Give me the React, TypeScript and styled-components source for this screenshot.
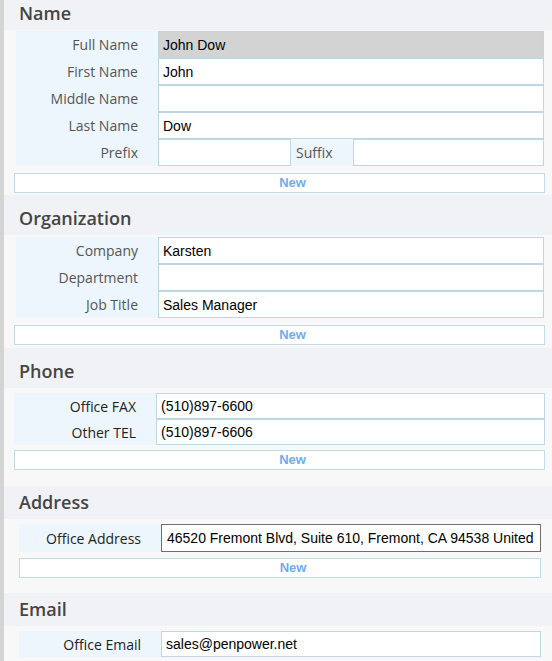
import React from 'react';
import styled, { createGlobalStyle } from 'styled-components';

const GlobalStyle = createGlobalStyle`
  html, body {
    margin: 0;
    padding: 0;
    background: #f8f8f8;
  }
  body {
    font-family: "Open Sans", "Noto Sans", sans-serif;
  }
`;

type Field = {
  label: string;
  value?: string;
  readOnly?: boolean;
  focused?: boolean;
  extra?: { label: string; value?: string };
};

type SectionData = {
  title: string;
  headerHeight: number;
  bodyPad: string;
  side: [number, number];
  rowHeight: number;
  darkLabels?: boolean;
  showNew?: boolean;
  newGap?: number;
  fields: Field[];
};

const sections: SectionData[] = [
  {
    title: 'Name',
    headerHeight: 30,
    bodyPad: '1px 0 2px',
    side: [12, 8],
    rowHeight: 27,
    showNew: true,
    newGap: 7,
    fields: [
      { label: 'Full Name', value: 'John Dow', readOnly: true },
      { label: 'First Name', value: 'John' },
      { label: 'Middle Name' },
      { label: 'Last Name', value: 'Dow' },
      { label: 'Prefix', extra: { label: 'Suffix' } },
    ],
  },
  {
    title: 'Organization',
    headerHeight: 40,
    bodyPad: '2px 0 3px',
    side: [12, 8],
    rowHeight: 27,
    showNew: true,
    newGap: 7,
    fields: [
      { label: 'Company', value: 'Karsten' },
      { label: 'Department' },
      { label: 'Job Title', value: 'Sales Manager' },
    ],
  },
  {
    title: 'Phone',
    headerHeight: 40,
    bodyPad: '5px 0 16px',
    side: [10, 7],
    rowHeight: 26,
    darkLabels: true,
    showNew: true,
    newGap: 5,
    fields: [
      { label: 'Office FAX', value: '(510)897-6600' },
      { label: 'Other TEL', value: '(510)897-6606' },
    ],
  },
  {
    title: 'Address',
    headerHeight: 33,
    bodyPad: '5px 0 15px',
    side: [15, 11],
    rowHeight: 28,
    darkLabels: true,
    showNew: true,
    newGap: 6,
    fields: [
      {
        label: 'Office Address',
        value: '46520 Fremont Blvd, Suite 610, Fremont, CA 94538 United',
        focused: true,
      },
    ],
  },
  {
    title: 'Email',
    headerHeight: 33,
    bodyPad: '5px 0 10px',
    side: [15, 11],
    rowHeight: 26,
    darkLabels: true,
    fields: [{ label: 'Office Email', value: 'sales@penpower.net' }],
  },
];

export default function App() {
  return (
    <>
      <GlobalStyle />
      <Page>
        {sections.map((section) => (
          <section key={section.title}>
            <Header $h={section.headerHeight}>{section.title}</Header>
            <Body $pad={section.bodyPad}>
              <Rows $left={section.side[0]} $right={section.side[1]}>
                {section.fields.map((field) => (
                  <Row key={field.label} $h={section.rowHeight}>
                    <Label $dark={section.darkLabels}>{field.label}</Label>
                    {field.extra ? (
                      <SplitCell>
                        <Input>{field.value}</Input>
                        <SubLabel>{field.extra.label}</SubLabel>
                        <Input>{field.extra.value}</Input>
                      </SplitCell>
                    ) : (
                      <Input $readOnly={field.readOnly} $focused={field.focused}>
                        {field.value}
                      </Input>
                    )}
                  </Row>
                ))}
              </Rows>
              {section.showNew && (
                <NewButton
                  $gap={section.newGap || 7}
                  $left={section.side[0] === 12 ? 10 : section.side[0]}
                  $right={section.side[1] === 8 ? 7 : section.side[1]}
                >
                  New
                </NewButton>
              )}
            </Body>
          </section>
        ))}
      </Page>
    </>
  );
}

const Page = styled.div`
  border-left: 4px solid #d4d4d4;
  min-height: 661px;
  background: #f8f8f8;
`;

const Header = styled.div<{ $h: number }>`
  display: flex;
  align-items: flex-end;
  height: ${(p) => p.$h}px;
  box-sizing: border-box;
  padding: 0 0 4px 15px;
  background: #f0f2f5;
  font-family: "Open Sans", "Noto Sans", sans-serif;
  font-weight: 600;
  font-size: 18px;
  line-height: 26px;
  color: #454545;
`;

const Body = styled.div<{ $pad: string }>`
  background: #f8f8f8;
  padding: ${(p) => p.$pad};
`;

const Rows = styled.div<{ $left: number; $right: number }>`
  margin: 0 ${(p) => p.$right}px 0 ${(p) => p.$left}px;
  background: #eef6fd;
`;

const Row = styled.div<{ $h: number }>`
  display: grid;
  grid-template-columns: 142px 1fr;
  height: ${(p) => p.$h}px;
`;

const Label = styled.div<{ $dark?: boolean }>`
  display: flex;
  align-items: center;
  justify-content: flex-end;
  padding-right: 20px;
  font-size: 14px;
  color: ${(p) => (p.$dark ? '#222' : '#555')};
  white-space: nowrap;
`;

const SplitCell = styled.div`
  display: grid;
  grid-template-columns: 133px 62px 1fr;
`;

const SubLabel = styled.div`
  display: flex;
  align-items: center;
  padding-left: 5px;
  font-size: 14px;
  color: #555;
`;

const Input = styled.div<{ $readOnly?: boolean; $focused?: boolean }>`
  display: flex;
  align-items: center;
  box-sizing: border-box;
  height: 100%;
  min-width: 0;
  overflow: hidden;
  white-space: nowrap;
  padding-left: ${(p) => (p.$focused ? 5 : 4)}px;
  border: 1px solid ${(p) => (p.$focused ? '#6f6f6f' : '#bdd7e5')};
  background: ${(p) => (p.$readOnly ? '#d3d3d3' : '#fff')};
  font-family: "Liberation Sans", Arial, sans-serif;
  font-size: 14px;
  color: #000;
`;

const NewButton = styled.div<{ $gap: number; $left: number; $right: number }>`
  margin: ${(p) => p.$gap}px ${(p) => p.$right}px 0 ${(p) => p.$left}px;
  height: 20px;
  box-sizing: border-box;
  padding-left: 26px;
  border: 1px solid #c3dbe8;
  background: #fff;
  text-align: center;
  font-family: "Liberation Sans", Arial, sans-serif;
  font-weight: bold;
  font-size: 13px;
  line-height: 18px;
  color: #72abf2;
  cursor: pointer;
`;
